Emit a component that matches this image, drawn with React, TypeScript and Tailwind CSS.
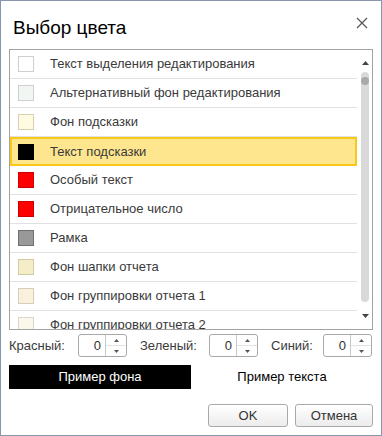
import React from "react";

const rows: { label: string; fill: string; border: string }[] = [
  { label: "Текст выделения редактирования", fill: "#ffffff", border: "#cfcfcf" },
  { label: "Альтернативный фон редактирования", fill: "#f2f6f2", border: "#cfcfcf" },
  { label: "Фон подсказки", fill: "#fffbe0", border: "#d8d0b4" },
  { label: "Текст подсказки", fill: "#000000", border: "#000000" },
  { label: "Особый текст", fill: "#ff0000", border: "#d00000" },
  { label: "Отрицательное число", fill: "#ff0000", border: "#d00000" },
  { label: "Рамка", fill: "#999999", border: "#707070" },
  { label: "Фон шапки отчета", fill: "#f5ecc8", border: "#d4caa4" },
  { label: "Фон группировки отчета 1", fill: "#f8f1de", border: "#d6ceb6" },
  { label: "Фон группировки отчета 2", fill: "#fbf7ec", border: "#dcd6c4" },
];

function Spinner() {
  return (
    <div className="flex h-[23px] w-[49px] rounded-[3px] border border-[#a9a9a9] bg-white">
      <div className="flex flex-1 items-center justify-end pr-[4px] text-[13px] text-[#333]">0</div>
      <div className="flex w-[21px] flex-col border-l border-[#c8c8c8]">
        <div className="flex flex-1 items-center justify-center border-b border-[#e2e2e2]">
          <svg width="5" height="3" viewBox="0 0 5 3"><path d="M0 3 L2.5 0 L5 3 Z" fill="#555" /></svg>
        </div>
        <div className="flex flex-1 items-center justify-center">
          <svg width="5" height="3" viewBox="0 0 5 3"><path d="M0 0 L2.5 3 L5 0 Z" fill="#555" /></svg>
        </div>
      </div>
    </div>
  );
}

export default function App() {
  return (
    <div
      className="flex h-[436px] w-[382px] flex-col border border-[#8796ac] bg-white"
      style={{ fontFamily: '"Liberation Sans", Arial, sans-serif' }}
    >
      <div className="flex h-[48px] items-start justify-between pl-[12px] pr-[13px] pt-[15px]">
        <div className="text-[19px] leading-[24px] text-black">Выбор цвета</div>
        <svg className="mt-[1px]" width="12" height="12" viewBox="0 0 12 12">
          <path d="M1 1 L11 11 M11 1 L1 11" stroke="#555" strokeWidth="1.2" />
        </svg>
      </div>

      <div className="mx-[8px] flex h-[281px] overflow-hidden border border-[#a3a3a3]">
        <div className="flex flex-1 flex-col overflow-hidden">
          {rows.map((r, i) => {
            const sel = i === 3;
            return (
              <div
                key={i}
                className={
                  sel
                    ? "flex h-[29px] shrink-0 items-center border-2 border-[#f8c918] bg-[#fde68e] pl-[6px]"
                    : "flex h-[29px] shrink-0 items-center border-b border-[#e1e1e1] pl-[8px]"
                }
              >
                <div
                  className="h-[16px] w-[16px] shrink-0 border"
                  style={{ backgroundColor: r.fill, borderColor: r.border }}
                />
                <div className="ml-[16px] whitespace-nowrap text-[13px] text-[#3a3a3a]">{r.label}</div>
              </div>
            );
          })}
        </div>
        <div className="flex w-[15px] flex-col items-center pl-[1px]">
          <div className="flex h-[22px] items-end justify-center pb-[7px]">
            <svg width="7" height="4" viewBox="0 0 7 4"><path d="M0 4 L3.5 0 L7 4 Z" fill="#444" /></svg>
          </div>
          <div className="relative h-[230px] w-[8px] rounded-[4px] bg-[#d9d9d9]">
            <div className="absolute left-0 top-[5px] h-[8px] w-[8px] rounded-full bg-[#a9a9a9]" />
          </div>
          <div className="flex flex-1 items-center justify-center">
            <svg width="7" height="4" viewBox="0 0 7 4"><path d="M0 0 L3.5 4 L7 0 Z" fill="#444" /></svg>
          </div>
        </div>
      </div>

      <div className="mt-[4px] flex h-[23px] items-center pl-[8px] text-[13px] text-[#3a3a3a]">
        <span className="w-[69px]">Красный:</span>
        <Spinner />
        <span className="ml-[13px] w-[69px]">Зеленый:</span>
        <Spinner />
        <span className="ml-[13px] w-[52px]">Синий:</span>
        <Spinner />
      </div>

      <div className="mx-[8px] mt-[8px] flex h-[24px] text-[13px]">
        <div className="flex w-[182px] items-center justify-center bg-black text-white">Пример фона</div>
        <div className="flex flex-1 items-center justify-center text-black">Пример текста</div>
      </div>

      <div className="mr-[8px] mt-[15px] flex justify-end gap-[7px] text-[13px] text-[#333]">
        <button className="h-[23px] w-[80px] rounded-[3px] border border-[#a9a9a9] bg-gradient-to-b from-white to-[#ececec]">
          OK
        </button>
        <button className="h-[23px] w-[78px] rounded-[3px] border border-[#a9a9a9] bg-gradient-to-b from-white to-[#ececec]">
          Отмена
        </button>
      </div>
    </div>
  );
}
